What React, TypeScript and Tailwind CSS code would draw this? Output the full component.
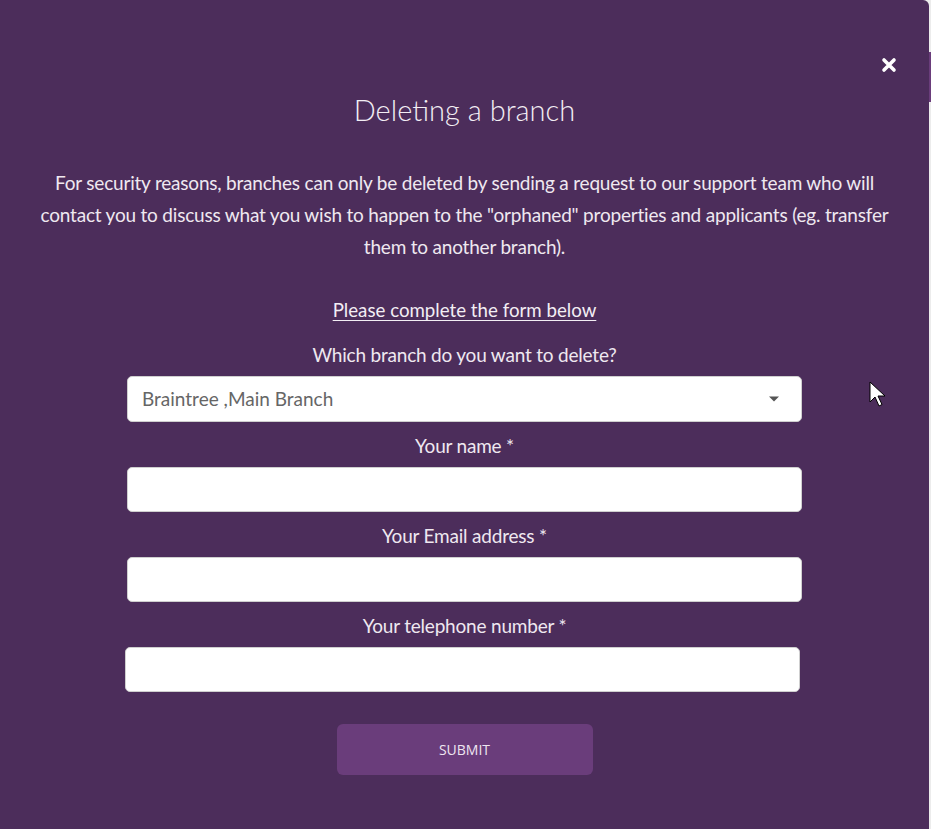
const font = { fontFamily: "Lato, 'Noto Sans', sans-serif" };

function Field({ label, select, shift }: { label: string; select?: boolean; shift?: boolean }) {
  return (
    <div className="flex flex-col items-center">
      <label className="h-[45px] pt-[3px] flex items-center text-[19px] text-[#efe8f0] tracking-[-0.2px]">{label}</label>
      <div
        className={`w-[675px] ${select ? "h-[46px]" : "h-[45px]"} rounded-[5px] bg-white border border-[#cfcfcf] flex items-center justify-between px-[14px] ${shift ? "-translate-x-[2px]" : ""}`}
      >
        {select && (
          <>
            <span className="text-[19px] text-[#666666]">Braintree ,Main Branch</span>
            <svg width="12" height="8" viewBox="0 0 12 8" className="mr-[7px]">
              <path d="M1 1.5h10L6 6.5z" fill="#555" />
            </svg>
          </>
        )}
      </div>
    </div>
  );
}

export default function App() {
  return (
    <div className="min-h-screen w-[931px] h-[829px] overflow-hidden flex bg-[#ececec]" style={font}>
      <div className="relative w-[929px] h-[829px] bg-[#4c2d5b] rounded-tr-[6px] text-[#efe8f0]">
        <button className="absolute right-[32px] top-[57px] text-white">
          <svg width="16" height="16" viewBox="0 0 16 16">
            <path d="M3 3l10 10M13 3L3 13" stroke="white" strokeWidth="3.6" strokeLinecap="round" />
          </svg>
        </button>

        <div className="flex flex-col items-center pt-[88px]">
          <h1 className="text-[29px] font-light leading-[44px] text-[#f3eef4]">Deleting a branch</h1>

          <p className="mt-[35px] text-center text-[19px] leading-[32px] tracking-[-0.2px]">
            For security reasons, branches can only be deleted by sending a request to our support team who will
            <br />
            contact you to discuss what you wish to happen to the "orphaned" properties and applicants (eg. transfer
            <br />
            them to another branch).
          </p>

          <a className="mt-[32px] text-[18.7px] leading-[30px] underline underline-offset-[3px] text-[#f3eef4]">
            Please complete the form below
          </a>

          <div className="mt-[6px] flex flex-col">
            <Field label="Which branch do you want to delete?" select />
            <Field label="Your name *" />
            <Field label="Your Email address *" />
            <Field label="Your telephone number *" shift />
          </div>

          <button className="mt-[32px] w-[256px] h-[51px] rounded-[6px] bg-[#6a3d7b] text-[14px] text-[#efe6f1] uppercase" style={{ fontFamily: "'Open Sans', sans-serif" }}>
            Submit
          </button>
        </div>

        <svg className="absolute left-[869px] top-[381px]" width="20" height="28" viewBox="0 0 20 28">
          <path d="M1 1v20l5-5 4 9 3-1.5-4-8.5h7z" fill="white" stroke="black" strokeWidth="1" />
        </svg>
      </div>
      <div className="flex-1 flex flex-col">
        <div className="h-[52px]" />
        <div className="h-[50px] bg-[#6a3d7b]" />
        <div className="flex-1" />
      </div>
    </div>
  );
}
